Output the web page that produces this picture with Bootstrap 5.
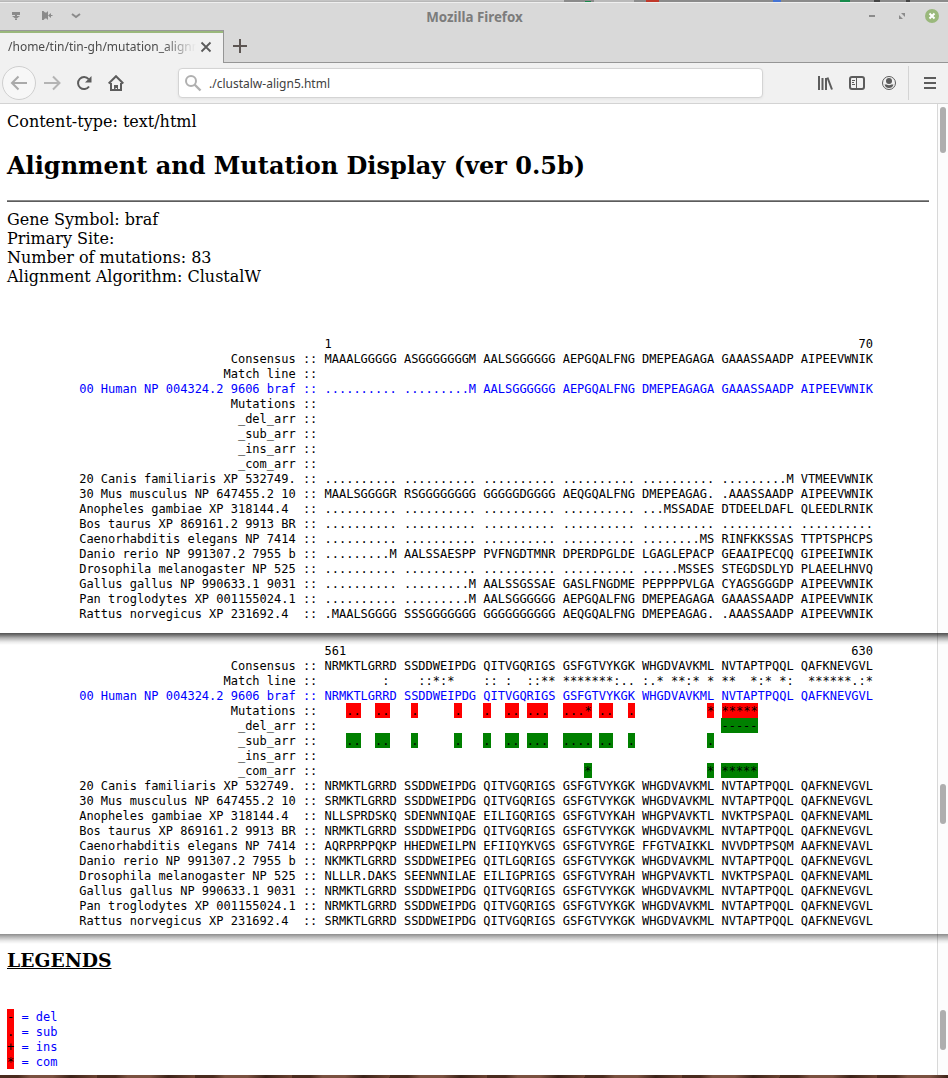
<!DOCTYPE html>
<html lang="en">
<head>
<meta charset="utf-8">
<meta name="viewport" content="width=device-width, initial-scale=1">
<title>Mozilla Firefox</title>
<link href="https://cdn.jsdelivr.net/npm/bootstrap@5.3.0/dist/css/bootstrap.min.css" rel="stylesheet">
<style>
html, body { height: 1078px; overflow: hidden; }
body { background: #fff; color: #000; font-family: "DejaVu Serif", serif; font-size: 16px; line-height: 19px; }
svg { display: block; flex: none; }
.window { width: 948px; height: 1078px; }
.chrome { font-family: "Noto Sans", sans-serif; background: #d9d9d9; }
.desk-top { height: 3px; background: linear-gradient(#c4c4c4 0 1px, #b8b8b8 1px 2px, #efefef 2px 3px); }
.desk-top svg { margin-left: 564px; }
.titlebar { height: 27px; display: grid; grid-template-columns: 1fr auto 1fr; padding: 0 9px 0 10px; }
.titlebar .caption { font-size: 13.33px; font-weight: 700; color: #7c7c7c; line-height: 27px; padding-top: 1px; height: 27px; }
.tabstrip { height: 33px; }
.tab-on { width: 224px; background: #f1f1f1; border-top: 1px solid #999; border-right: 1px solid #959595; box-shadow: inset 0 2px #9ab87c; padding-left: 8px; padding-right: 11px; }
.tab-text { flex: none; margin-right: -12px; white-space: nowrap; font-size: 12px; line-height: 18px; color: #4c4c4c; -webkit-mask-image: linear-gradient(90deg, #000 155px, transparent 188px); mask-image: linear-gradient(90deg, #000 155px, transparent 188px); }
.tab-rest { border-bottom: 1px solid #959595; padding: 0 0 1px 8px; }
.toolbar { height: 41px; background: #f1f1f1; border-bottom: 1px solid #d3d3d3; padding: 0 8px 0 2px; }
.back { width: 34px; height: 34px; border: 1px solid #cfcfcf; border-radius: 50%; background: #f7f7f7; }
.urlbar { width: 585px; height: 30px; background: #fff; border: 1px solid #d4d4d4; border-radius: 4px; box-shadow: 0 1px 3px rgba(0,0,0,.06); font-size: 12px; color: #404040; padding-left: 5px; }
.vsep { width: 1px; height: 34px; background: #d4d4d4; }
.page-body { width: 937px; padding-left: 7px; padding-right: 8px; }
.track { width: 11px; background: #fcfcfc; border-left: 1px solid #d8d8d8; padding-left: 2px; }
.thumb { width: 6px; border-radius: 3px; background: #aeaeae; }
.p1 { height: 529px; } .p2 { height: 301px; } .p3 { height: 141px; }
.p1 .page-body { padding-top: 8px; }
.p1 .track { padding-top: 3px; } .p1 .thumb { height: 46px; }
.p2 .track { padding-top: 151px; } .p2 .thumb { height: 40px; }
.p3 .track { padding-top: 76px; } .p3 .thumb { height: 40px; }
.p2 .page-body { padding-top: 11px; }
.p3 .page-body { padding-top: 15px; }
.cut { position: relative; }
.cut::before { content: ""; position: absolute; left: 0; right: 0; top: 0; height: 12px; background: linear-gradient(rgba(0,0,0,.68), rgba(0,0,0,.55) 2px, rgba(0,0,0,.3) 5px, rgba(0,0,0,.08) 9px, transparent); }
.p3.cut::before { height: 10px; background: linear-gradient(rgba(0,0,0,.45), rgba(0,0,0,.28) 3px, rgba(0,0,0,.08) 7px, transparent); }
h1 { font-size: 24px; line-height: 28px; font-weight: 700; margin: 21px 0 20px; }
.rule { height: 2px; background: linear-gradient(#8a8a8a 50%, #5c5c5c 50%); margin-bottom: 8px; }
h2 { font-size: 18.72px; line-height: 22px; font-weight: 700; text-decoration: underline; margin: 0 0 39px; }
pre { font-family: "DejaVu Sans Mono", monospace; font-size: 12px; line-height: 15px; letter-spacing: -.008px; margin: 0; color: #000; overflow: visible; }
pre i { font-style: normal; color: #00f; }
pre b { font-weight: 400; color: #000; display: inline-block; height: 15px; margin-top: -1px; padding-top: 1px; vertical-align: top; background: red; }
pre b.g { background: green; }
.p1 pre { margin-top: 51px; }
.wood { height: 3px; background: repeating-linear-gradient(100deg, #4a2b1e 0 18px, #7a5140 30px 52px, #3c2218 70px, #6b4331 96px); }
</style>
</head>
<body>
<div class="window d-flex flex-column">
  <header class="chrome">
    <div class="desk-top"><svg width="384" height="2"><path fill="#8b8b8b" d="M0 0h384v2H0z"/><path fill="#b9b9b9" d="M30 0h40v2H30z"/><path fill="#c0392b" d="M82 0h13v2H82z"/><path fill="#4574d4" d="M209 0h8v2h-8z"/><path fill="#178a4b" d="M276 0h10v2h-10zM21 1h6v1h-6z"/><path fill="#444" d="M310 0h6v2h-6zM342 0h4v2h-4z"/></svg></div>
    <div class="titlebar">
      <div class="d-flex">
        <svg width="80" height="27" fill="#8b8b8b"><path d="M2 9h8v3H7v1h3l-4 3-4-3h3v-1H2zM5 16h2v1H5z"/><path d="M32 8h1.500l1.500 1.500h1.500L38 8v9l-1.500-1.500H35L33.500 17H32zM38 12.500l3-2.500v2h1.500v1H41v2z"/><path d="M62 11l4 3 4-3" stroke="#8b8b8b" stroke-width="2" fill="none"/></svg>
      </div>
      <div class="caption">Mozilla Firefox</div>
      <div class="d-flex justify-content-end">
        <svg width="70" height="27"><path fill="#8b8b8b" d="M0 12h6v2H0zM32 10h4v4zM30 12v4h4z"/><circle cx="63" cy="13" r="7" fill="#9ab87c"/><path d="M60.500 10.500l5 5m0-5l-5 5" stroke="#fff" stroke-width="2"/></svg>
      </div>
    </div>
    <div class="tabstrip d-flex">
      <div class="tab-on d-flex align-items-center justify-content-between">
        <div class="tab-text">/home/tin/tin-gh/mutation_alignm</div>
        <svg width="12" height="12" viewBox="0 0 12 12"><path d="M1.500 1.500l9 9m0-9l-9 9" stroke="#5a5a5a" stroke-width="1.800"/></svg>
      </div>
      <div class="tab-rest flex-grow-1 d-flex align-items-center">
        <svg width="16" height="16"><path d="M8 1v14M1 8h14" stroke="#5c5552" stroke-width="2"/></svg>
      </div>
    </div>
    <nav class="toolbar d-flex align-items-center">
      <div class="back d-flex align-items-center justify-content-center"><svg width="18" height="16" fill="none" stroke="#aaa" stroke-width="2"><path d="M17 8H2M8.500 1.500L2 8l6.500 6.500"/></svg></div>
      <svg class="ms-2" width="18" height="16" fill="none" stroke="#b4b4b4" stroke-width="2"><path d="M0 8h15M9 1.500L15.500 8 9 14.500"/></svg>
      <svg style="margin-left:14px" width="16" height="16" fill="none" stroke="#5c5c5c" stroke-width="2"><path d="M13 11.500A6 6 0 1 1 12.600 4.200"/><path d="M15.500 1v6.500H9z" fill="#5c5c5c" stroke="none"/></svg>
      <svg class="ms-3" width="16" height="16" fill="none" stroke="#5c5c5c" stroke-width="2"><path d="M.7 8.500L8 1.200l7.300 7.300M3 8v7h10V8"/><path d="M6 15v-5h4v5h-1v-2H7.500v2z" fill="#5c5c5c" stroke="none"/></svg>
      <div class="urlbar d-flex align-items-center" style="margin-left:54px">
        <svg width="18" height="18" fill="none" stroke="#b0b0b0" stroke-width="2"><circle cx="7" cy="7" r="5"/><path d="M10.500 10.500l6 6" stroke-width="2.400"/></svg>
        <span style="margin-left:7px">./clustalw-align5.html</span>
      </div>
      <div class="d-flex align-items-center ms-auto">
        <svg width="16" height="16" fill="none" stroke="#5c5c5c" stroke-width="2"><path d="M2 1v14M5.500 3v12M9 3v12"/><path d="M10.500 2.500l4.500 12"/></svg>
        <svg style="margin-left:16px" width="16" height="16" fill="none" stroke="#5c5c5c"><rect x="1" y="2" width="14" height="12" rx="2" stroke-width="2"/><path d="M7.500 2v12M3 5.500h3M3 7.500h2M3 9.500h3"/></svg>
        <svg style="margin-left:16px" width="16" height="16" viewBox="0 0 16 16"><circle cx="8" cy="8" r="6.500" fill="none" stroke="#5c5c5c"/><circle cx="8" cy="6" r="3" fill="#5c5c5c"/><path d="M3.500 9.500h2Q8 11 10.500 9.500h2Q11.500 13 8 13T3.500 9.500" fill="#5c5c5c"/></svg>
        <div class="vsep" style="margin-left:11px"></div>
        <svg style="margin-left:15px;margin-right:4px" width="12" height="14"><path d="M0 2h12M0 7h12M0 12h12" stroke="#5c5c5c" stroke-width="2"/></svg>
      </div>
    </nav>
  </header>
  <section class="p1 d-flex">
    <div class="page-body">
      <div>Content-type: text/html</div>
      <h1>Alignment and Mutation Display (ver 0.5b)</h1>
      <div class="rule"></div>
      <div>Gene Symbol: braf<br>Primary Site:<br>Number of mutations: 83<br>Alignment Algorithm: ClustalW</div>
<pre>
                                            1                                                                         70
                               Consensus :: MAAALGGGGG ASGGGGGGGM AALSGGGGGG AEPGQALFNG DMEPEAGAGA GAAASSAADP AIPEEVWNIK
                              Match line ::
<i>          00 Human NP 004324.2 9606 braf :: .......... .........M AALSGGGGGG AEPGQALFNG DMEPEAGAGA GAAASSAADP AIPEEVWNIK</i>
                               Mutations ::
                                _del_arr ::
                                _sub_arr ::
                                _ins_arr ::
                                _com_arr ::
          20 Canis familiaris XP 532749. :: .......... .......... .......... .......... .......... .........M VTMEEVWNIK
          30 Mus musculus NP 647455.2 10 :: MAALSGGGGR RSGGGGGGGG GGGGGDGGGG AEQGQALFNG DMEPEAGAG. .AAASSAADP AIPEEVWNIK
          Anopheles gambiae XP 318144.4  :: .......... .......... .......... .......... ...MSSADAE DTDEELDAFL QLEEDLRNIK
          Bos taurus XP 869161.2 9913 BR :: .......... .......... .......... .......... .......... .......... ..........
          Caenorhabditis elegans NP 7414 :: .......... .......... .......... .......... ........MS RINFKKSSAS TTPTSPHCPS
          Danio rerio NP 991307.2 7955 b :: .........M AALSSAESPP PVFNGDTMNR DPERDPGLDE LGAGLEPACP GEAAIPECQQ GIPEEIWNIK
          Drosophila melanogaster NP 525 :: .......... .......... .......... .......... .....MSSES STEGDSDLYD PLAEELHNVQ
          Gallus gallus NP 990633.1 9031 :: .......... .........M AALSSGSSAE GASLFNGDME PEPPPPVLGA CYAGSGGGDP AIPEEVWNIK
          Pan troglodytes XP 001155024.1 :: .......... .........M AALSGGGGGG AEPGQALFNG DMEPEAGAGA GAAASSAADP AIPEEVWNIK
          Rattus norvegicus XP 231692.4  :: .MAALSGGGG SSSGGGGGGG GGGGGGGGGG AEQGQALFNG DMEPEAGAG. .AAASSAADP AIPEEVWNIK
</pre>
    </div>
    <div class="track"><div class="thumb"></div></div>
  </section>
  <section class="p2 cut d-flex">
    <div class="page-body">
<pre>
                                            561                                                                      630
                               Consensus :: NRMKTLGRRD SSDDWEIPDG QITVGQRIGS GSFGTVYKGK WHGDVAVKML NVTAPTPQQL QAFKNEVGVL
                              Match line ::         :    ::*:*    :: :  ::** *******:.. :.* **:* * **  *:* *:  ******.:*
<i>          00 Human NP 004324.2 9606 braf :: NRMKTLGRRD SSDDWEIPDG QITVGQRIGS GSFGTVYKGK WHGDVAVKML NVTAPTPQQL QAFKNEVGVL</i>
                               Mutations ::    <b>..</b>  <b>..</b>   <b>.</b>     <b>.</b>   <b>.</b>  <b>..</b> <b>...</b>  <b>...*</b> <b>..</b>  <b>.</b>          <b>*</b> <b>*****</b>
                                _del_arr ::                                                        <b class="g">-----</b>
                                _sub_arr ::    <b class="g">..</b>  <b class="g">..</b>   <b class="g">.</b>     <b class="g">.</b>   <b class="g">.</b>  <b class="g">..</b> <b class="g">...</b>  <b class="g">....</b> <b class="g">..</b>  <b class="g">.</b>          <b class="g">.</b>
                                _ins_arr ::
                                _com_arr ::                                     <b class="g">*</b>                <b class="g">*</b> <b class="g">*****</b>
          20 Canis familiaris XP 532749. :: NRMKTLGRRD SSDDWEIPDG QITVGQRIGS GSFGTVYKGK WHGDVAVKML NVTAPTPQQL QAFKNEVGVL
          30 Mus musculus NP 647455.2 10 :: SRMKTLGRRD SSDDWEIPDG QITVGQRIGS GSFGTVYKGK WHGDVAVKML NVTAPTPQQL QAFKNEVGVL
          Anopheles gambiae XP 318144.4  :: NLLSPRDSKQ SDENWNIQAE EILIGQRIGS GSFGTVYKAH WHGPVAVKTL NVKTPSPAQL QAFKNEVAML
          Bos taurus XP 869161.2 9913 BR :: NRMKTLGRRD SSDDWEIPDG QITVGQRIGS GSFGTVYKGK WHGDVAVKML NVTAPTPQQL QAFKNEVGVL
          Caenorhabditis elegans NP 7414 :: AQRPRPPQKP HHEDWEILPN EFIIQYKVGS GSFGTVYRGE FFGTVAIKKL NVVDPTPSQM AAFKNEVAVL
          Danio rerio NP 991307.2 7955 b :: NKMKTLGRRD SSDDWEIPEG QITLGQRIGS GSFGTVYKGK WHGDVAVKML NVTAPTPQQL QAFKNEVGVL
          Drosophila melanogaster NP 525 :: NLLLR.DAKS SEENWNILAE EILIGPRIGS GSFGTVYRAH WHGPVAVKTL NVKTPSPAQL QAFKNEVAML
          Gallus gallus NP 990633.1 9031 :: NRMKTLGRRD SSDDWEIPDG QITVGQRIGS GSFGTVYKGK WHGDVAVKML NVTAPTPQQL QAFKNEVGVL
          Pan troglodytes XP 001155024.1 :: NRMKTLGRRD SSDDWEIPDG QITVGQRIGS GSFGTVYKGK WHGDVAVKML NVTAPTPQQL QAFKNEVGVL
          Rattus norvegicus XP 231692.4  :: SRMKTLGRRD SSDDWEIPDG QITVGQRIGS GSFGTVYKGK WHGDVAVKML NVTAPTPQQL QAFKNEVGVL
</pre>
    </div>
    <div class="track"><div class="thumb"></div></div>
  </section>
  <section class="p3 cut d-flex">
    <div class="page-body">
      <h2>LEGENDS</h2>
<pre><i><b>-</b> = del
<b>.</b> = sub
<b>+</b> = ins
<b>*</b> = com</i></pre>
    </div>
    <div class="track"><div class="thumb"></div></div>
  </section>
  <div class="wood"></div>
</div>
<script src="https://cdn.jsdelivr.net/npm/bootstrap@5.3.0/dist/js/bootstrap.bundle.min.js"></script>
</body>
</html>
